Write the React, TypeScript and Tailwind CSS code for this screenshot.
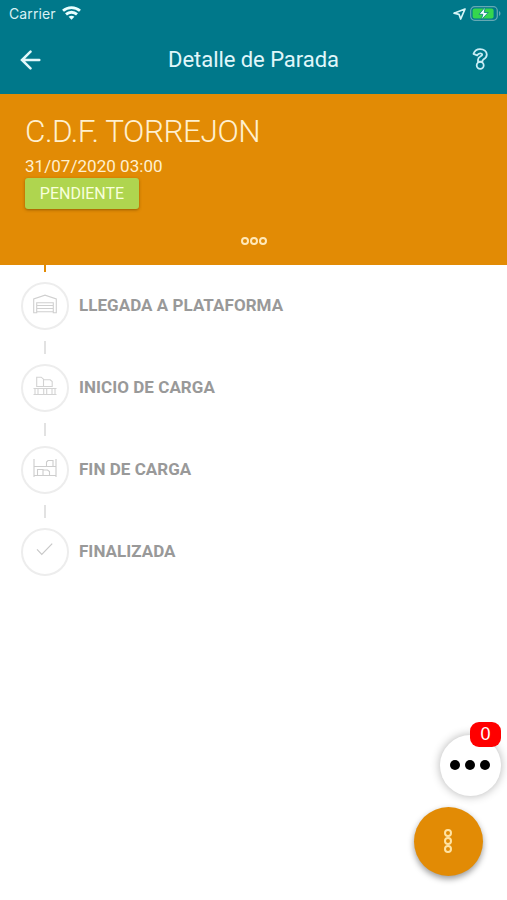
import type { ReactNode } from "react";

function WarehouseIcon() {
  return (
    <svg width="24" height="20" viewBox="0 0 24 20" fill="none" stroke="#d0d0d0" strokeWidth="1.1">
      <path d="M.7 18.7V5L12 1.2 23.3 5v13.7h-3V8.7H3.7v10z" />
      <path d="M4 11.5h16M4 14.5h16M4 17.8h16" />
    </svg>
  );
}

function LoadIcon() {
  return (
    <svg width="24" height="20" viewBox="0 0 24 20" fill="none" stroke="#d3d3d3" strokeWidth="1.1">
      <path d="M3.7 10.5V1.2h4.5l2.3 2v7.3zM10.5 3.8h6.7l2 1.8v4.9h-8.7" />
      <path d="M.5 12.5h23M.5 18.5h23M2 12.5v6M5 12.5v6M10.7 12.5v6M13.7 12.5v6M19 12.5v6M22 12.5v6" />
    </svg>
  );
}

function ShelfIcon() {
  return (
    <svg width="24" height="20" viewBox="0 0 24 20" fill="none" stroke="#cdcdcd" strokeWidth="1.1">
      <path d="M1 1v18M23 1v18M1 8.5h22M1 17.5h22M13.5 8.5V4L15 2.5h5v6M4.5 17.5v-6H10v6M10 12h4.5l2 1.5v4" />
    </svg>
  );
}

function CheckIcon() {
  return (
    <svg width="24" height="20" viewBox="0 0 24 20" fill="none" stroke="#c8c8c8" strokeWidth="1.2">
      <path d="m4 9.4 4.8 5L19.2 3.7" />
    </svg>
  );
}

const steps: { label: string; icon: ReactNode }[] = [
  { label: "LLEGADA A PLATAFORMA", icon: <WarehouseIcon /> },
  { label: "INICIO DE CARGA", icon: <LoadIcon /> },
  { label: "FIN DE CARGA", icon: <ShelfIcon /> },
  { label: "FINALIZADA", icon: <CheckIcon /> },
];

function StatusBar() {
  return (
    <div className="flex h-[27px] items-center justify-between pr-[6px] pl-[9px]">
      <div className="flex items-center gap-[6px]">
        <span className="font-[Inter,sans-serif] text-[14px] tracking-[0.1px] text-[#d8f1f4]">Carrier</span>
        <svg width="19" height="14" viewBox="0 0 19 14" className="-mt-px" fill="none" stroke="#e9ffff" strokeWidth="2.8">
          <path d="M1 4.8c4.8-4.3 12.2-4.3 17 0M4 8.4c3.2-2.9 7.8-2.9 11 0" />
          <path d="m9.5 13.8-2.9-3.1c1.7-1.4 4.1-1.4 5.8 0z" fill="#e9ffff" stroke="none" />
        </svg>
      </div>
      <div className="flex items-center gap-[4px]">
        <svg width="13" height="12" viewBox="0 0 13 12" fill="none" stroke="#d6f5f7" strokeWidth="1.7" strokeLinejoin="round">
          <path d="M12 1 1 5.2l5 1.1L7.7 11z" />
        </svg>
        <svg width="31" height="15" viewBox="0 0 31 15">
          <rect x=".7" y=".7" width="26.6" height="13.6" rx="4" fill="none" stroke="#65a9b4" strokeWidth="1.2" />
          <rect x="2.6" y="2.6" width="21" height="9.8" rx="2" fill="#35d64e" />
          <path d="M29 5v5c2-1 2-4 0-5" fill="#65a9b4" />
          <path d="M15.3 1 9 8.3h3.9L11.2 14l7-7.5h-4z" fill="#f3ffff" stroke="#087e80" strokeWidth=".8" />
        </svg>
      </div>
    </div>
  );
}

export default function App() {
  return (
    <main className="relative flex h-[900px] w-full flex-col overflow-hidden bg-white font-[Roboto,sans-serif]">
      <header className="h-[94px] shrink-0 bg-[#00788a]">
        <StatusBar />
        <div className="grid h-[65px] grid-cols-[60px_1fr_60px] items-center">
          <button aria-label="Volver" className="pl-5">
            <svg width="21" height="20" viewBox="0 0 21 20" fill="none" stroke="#e2f8fa" strokeWidth="2.5" strokeLinecap="round">
              <path d="M19.3 10H2.5M10.5 1.7 2 10l8.5 8.3" />
            </svg>
          </button>
          <h1 className="text-center text-[22px] tracking-[-0.05px] text-[#e0f7fa]">Detalle de Parada</h1>
          <button aria-label="Ayuda" className="flex justify-end pr-[19px] pb-[2px]">
            <svg width="16" height="22" viewBox="0 0 16 22" fill="none" stroke="#c9edf5" strokeWidth="1.8" strokeLinejoin="round">
              <path d="M5.2 7.3 1.5 5.8C2.7 2.6 5 1.1 8 1.1c4 0 6.8 2.2 6.8 5.4 0 2.3-1.1 3.7-3.4 5-1 .6-1 1-1 2.1H6v-1.8c0-1.7 1-2.6 2.6-3.5 1.2-.7 1.6-1 1.6-1.6 0-1.7-3.7-2-5 .6z" />
              <circle cx="8.2" cy="17.3" r="3.5" />
            </svg>
          </button>
        </div>
      </header>
      <section className="flex h-[171px] shrink-0 flex-col items-start bg-[#e28b05] pt-5 pl-[25px] text-[#fff0cf]">
        <h2 className="h-[42px] text-[31.5px] leading-[35px] font-light tracking-[-0.45px]">C.D.F. TORREJON</h2>
        <p className="h-[22px] text-[17px] leading-[20px] tracking-[0.04px]">31/07/2020 03:00</p>
        <span className="flex h-[31px] w-[114px] items-center justify-center rounded-[3px] bg-[#afd54f] text-[16px] text-[#f8ffdc] shadow-[0_1px_3px_rgba(80,50,0,0.5)]">PENDIENTE</span>
        <div className="mt-[28px] ml-[216px] flex gap-[1px]">
          <i className="size-2 rounded-full border-2 border-[#ffe8b8]" />
          <i className="size-2 rounded-full border-2 border-[#ffe8b8]" />
          <i className="size-2 rounded-full border-2 border-[#ffe8b8]" />
        </div>
      </section>
      <section className="flex flex-col pl-[21px]">
        <div className="ml-[23px] h-[7px] w-[2px] bg-[#e28b05]" />
        <ol className="pt-[10px]">
          {steps.map((step, index) => (
            <li key={step.label} className="flex h-[82px] flex-col">
              <div className="flex items-center gap-[10px]">
                <div className="flex size-12 items-center justify-center rounded-full border-2 border-[#ededed] pb-[5px]">{step.icon}</div>
                <span className="text-[17px] font-bold tracking-[0.04px] text-[#999]">{step.label}</span>
              </div>
              {index < steps.length - 1 && <div className="mt-[11px] ml-[23px] h-[13px] w-[2px] bg-[#e2e2e2]" />}
            </li>
          ))}
        </ol>
      </section>
      <button aria-label="Mensajes" className="absolute top-[735px] left-[440px] flex size-[61px] items-center justify-center gap-[5px] rounded-full bg-white pr-[2px] pb-[2px] shadow-[0_0_10px_rgba(0,0,0,0.3)]">
        <i className="size-[10px] rounded-full bg-black" />
        <i className="size-[10px] rounded-full bg-black" />
        <i className="size-[10px] rounded-full bg-black" />
        <span className="absolute -top-[13px] left-[30px] flex h-[25px] w-[31px] items-center justify-center rounded-[9px] bg-[#f00] font-['Liberation_Sans',sans-serif] text-[18px] text-white">0</span>
      </button>
      <button aria-label="Opciones" className="absolute top-[807px] left-[414px] flex size-[69px] flex-col items-center justify-center rounded-full bg-[#e28b05] pr-px pb-px shadow-[0_3px_6px_rgba(0,0,0,0.4)]">
        <i className="size-2 rounded-full border-2 border-[#ffe3a3]" />
        <i className="size-2 rounded-full border-2 border-[#ffe3a3]" />
        <i className="size-2 rounded-full border-2 border-[#ffe3a3]" />
      </button>
    </main>
  );
}
